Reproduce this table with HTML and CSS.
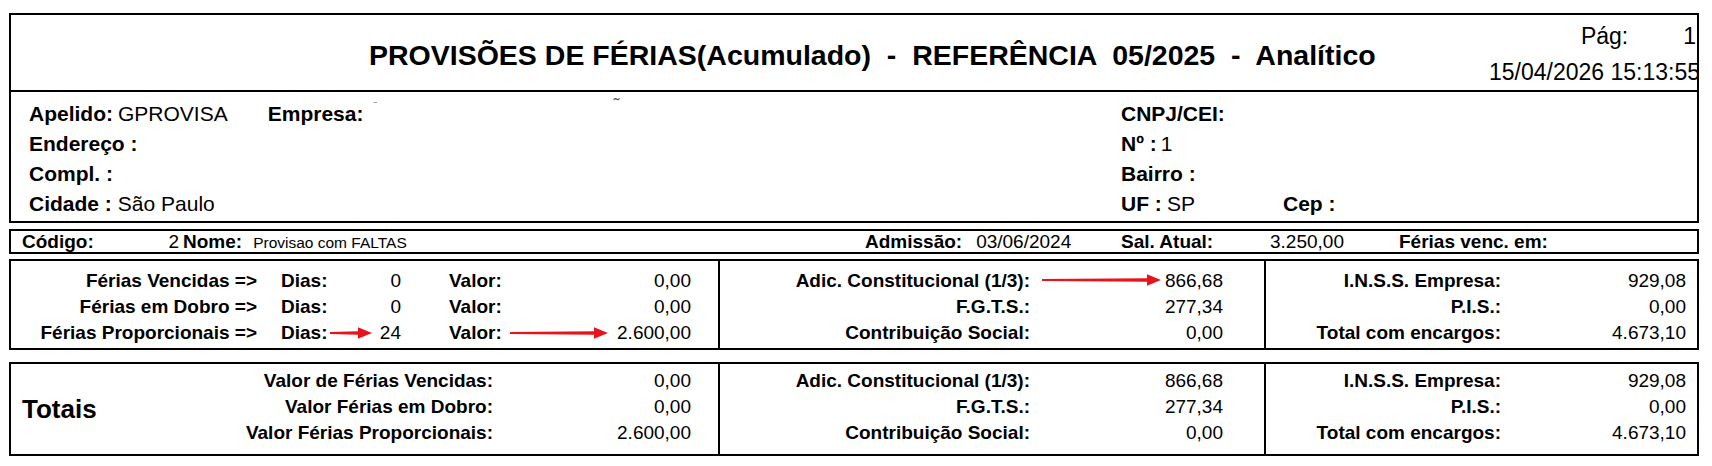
FILE: index.html
```html
<!DOCTYPE html>
<html lang="pt-BR">
<head>
<meta charset="utf-8">
<title>Provisões de Férias</title>
<link rel="stylesheet" href="styles.css">
</head>
<body>
<div class="report">
  <header class="head">
    <h1 class="title">PROVISÕES DE FÉRIAS(Acumulado)  -  REFERÊNCIA  05/2025  -  Analítico</h1>
    <div class="meta">
      <div class="page-no"><span>Pág:</span><span>1</span></div>
      <div class="stamp">15/04/2026 15:13:55</div>
    </div>
  </header>

  <section class="info">
    <div class="info-left">
      <div class="row"><b>Apelido:</b><span class="v1">GPROVISA</span><b class="emp-lbl">Empresa:</b><span class="dot">ˉ</span><span class="smudge">˜</span></div>
      <div class="row"><b>Endereço :</b></div>
      <div class="row"><b>Compl. :</b></div>
      <div class="row"><b>Cidade :</b><span class="v2">São Paulo</span></div>
    </div>
    <div class="info-right">
      <div class="row"><b>CNPJ/CEI:</b></div>
      <div class="row"><b>Nº :</b><span class="v3">1</span></div>
      <div class="row"><b>Bairro :</b></div>
      <div class="row"><b class="uf">UF :</b><span class="v4">SP</span><b class="cep">Cep :</b></div>
    </div>
  </section>

  <section class="emp">
    <div class="e-code"><b>Código:</b><span>2</span></div>
    <div class="e-name"><b>Nome:</b><span class="small">Provisao com FALTAS</span></div>
    <div class="e-adm"><b>Admissão:</b><span>03/06/2024</span></div>
    <b class="e-sal">Sal. Atual:</b>
    <span class="e-salv">3.250,00</span>
    <b class="e-fer">Férias venc. em:</b>
  </section>

  <section class="data">
    <div class="s1">
      <b class="r">Férias Vencidas =&gt;</b><span></span><b>Dias:</b><span class="r">0</span><span></span><b>Valor:</b><span class="r">0,00</span><span></span>
      <b class="r">Férias em Dobro =&gt;</b><span></span><b>Dias:</b><span class="r">0</span><span></span><b>Valor:</b><span class="r">0,00</span><span></span>
      <b class="r">Férias Proporcionais =&gt;</b><span></span><b>Dias:</b><span class="r">24</span><span></span><b>Valor:</b><span class="r">2.600,00</span><span></span>
    </div>
    <div class="s2">
      <b class="r">Adic. Constitucional (1/3):</b><span class="r">866,68</span><span></span>
      <b class="r">F.G.T.S.:</b><span class="r">277,34</span><span></span>
      <b class="r">Contribuição Social:</b><span class="r">0,00</span><span></span>
    </div>
    <div class="s3">
      <b class="r">I.N.S.S. Empresa:</b><span class="r">929,08</span><span></span>
      <b class="r">P.I.S.:</b><span class="r">0,00</span><span></span>
      <b class="r">Total com encargos:</b><span class="r">4.673,10</span><span></span>
    </div>
    <svg class="arrow a1" width="42" height="12" viewBox="0 0 42 12"><polygon points="0,5 28,4.2 28,0.3 42,6 28,11.7 28,7.8 0,7" fill="#e8141b"/></svg>
    <svg class="arrow a2" width="98" height="12" viewBox="0 0 98 12"><polygon points="0,5 84,4.2 84,0.3 98,6 84,11.7 84,7.8 0,7" fill="#e8141b"/></svg>
    <svg class="arrow a3" width="119" height="12" viewBox="0 0 119 12"><polygon points="0,5 105,4.2 105,0.3 119,6 105,11.7 105,7.8 0,7" fill="#e8141b"/></svg>
  </section>

  <section class="data totals">
    <div class="s1 t1">
      <b class="tot">Totais</b>
      <b class="r">Valor de Férias Vencidas:</b><span class="r">0,00</span><span></span>
      <b class="r">Valor Férias em Dobro:</b><span class="r">0,00</span><span></span>
      <b class="r">Valor Férias Proporcionais:</b><span class="r">2.600,00</span><span></span>
    </div>
    <div class="s2">
      <b class="r">Adic. Constitucional (1/3):</b><span class="r">866,68</span><span></span>
      <b class="r">F.G.T.S.:</b><span class="r">277,34</span><span></span>
      <b class="r">Contribuição Social:</b><span class="r">0,00</span><span></span>
    </div>
    <div class="s3">
      <b class="r">I.N.S.S. Empresa:</b><span class="r">929,08</span><span></span>
      <b class="r">P.I.S.:</b><span class="r">0,00</span><span></span>
      <b class="r">Total com encargos:</b><span class="r">4.673,10</span><span></span>
    </div>
  </section>
</div>
</body>
</html>
```

FILE: styles.css
```css
* { box-sizing: border-box; }

html, body {
  margin: 0;
  padding: 0;
  background: #fff;
}

body {
  font-family: "Liberation Sans", Arial, sans-serif;
  color: #000;
}

.report {
  margin: 13px 0 0 9px;
  width: 1690px;
}

b { font-weight: 700; }

/* Header */
.head {
  height: 79px;
  border: 2px solid #000;
  display: flex;
  overflow: hidden;
}

.title {
  margin: 0 0 0 358px;
  padding-top: 4px;
  align-self: center;
  font-size: 28.5px;
  font-weight: 700;
  white-space: pre;
  line-height: 32px;
}

.meta {
  margin-left: auto;
  padding-top: 8px;
  display: flex;
  flex-direction: column;
  align-items: flex-end;
  font-size: 23px;
}

.page-no {
  display: flex;
  gap: 55px;
  line-height: 26px;
  margin-right: 1px;
}

.stamp {
  margin-top: 10px;
  line-height: 26px;
  margin-right: -3px;
  white-space: nowrap;
}

/* Company info */
.info {
  height: 131px;
  border: 2px solid #000;
  border-top: 0;
  padding: 7px 0 0 18px;
  display: grid;
  grid-template-columns: 1092px 1fr;
  font-size: 21px;
}

.info .row {
  height: 30px;
  display: flex;
  align-items: center;
  white-space: nowrap;
}

.v1 { margin-left: 5px; }
.emp-lbl { margin-left: 40px; }
.dot {
  margin-left: 10px;
  margin-top: -14px;
  font-size: 12px;
  color: #888;
}
.smudge {
  margin-left: 236px;
  margin-top: -18px;
  font-size: 18px;
  color: #555;
}
.v2 { margin-left: 6px; }
.v3 { margin-left: 4px; }
.v4 { margin-left: 6px; }
.uf { width: 40px; }
.cep { margin-left: 88px; }

/* Employee row */
.emp {
  margin-top: 6px;
  height: 25px;
  border: 2px solid #000;
  padding-left: 11px;
  display: grid;
  grid-template-columns: 161px 682px 256px 149px 129px 1fr;
  align-items: center;
  font-size: 19px;
  white-space: nowrap;
}

.e-code {
  display: flex;
  justify-content: space-between;
  padding-right: 4px;
}

.e-name {
  display: flex;
  align-items: baseline;
}

.small {
  font-size: 15.5px;
  margin-left: 11px;
}

.e-adm span { margin-left: 14px; }

/* Data boxes */
.data {
  position: relative;
  margin-top: 5px;
  height: 91px;
  border: 2px solid #000;
  display: grid;
  grid-template-columns: 709px 546px 1fr;
  font-size: 19px;
}

.data > div {
  display: grid;
  grid-auto-rows: 26px;
  align-items: center;
  padding-top: 7px;
  white-space: nowrap;
}

.data .r { text-align: right; }

.s1 {
  grid-template-columns: 246px 24px 60px 60px 48px 100px 142px 29px;
  border-right: 2px solid #000;
}

.s2 {
  grid-template-columns: 310px 193px 1fr;
  border-right: 2px solid #000;
}

.s3 {
  grid-template-columns: 235px 185px 1fr;
}

.totals {
  margin-top: 12px;
  height: 94px;
}

.totals > div { padding-top: 4px; }

.t1 {
  grid-template-columns: 11px 218px 253px 198px 29px;
}

.t1 .tot {
  grid-column: 2;
  grid-row: 1 / span 3;
  font-size: 26px;
  padding-top: 5px;
}

.t1 .r:nth-child(2),
.t1 .r:nth-child(5),
.t1 .r:nth-child(8) { grid-column: 3; }

.arrow {
  position: absolute;
  display: block;
}

.a1 { left: 319px; top: 66px; }
.a2 { left: 499px; top: 66px; }
.a3 { left: 1031px; top: 13px; }
```
